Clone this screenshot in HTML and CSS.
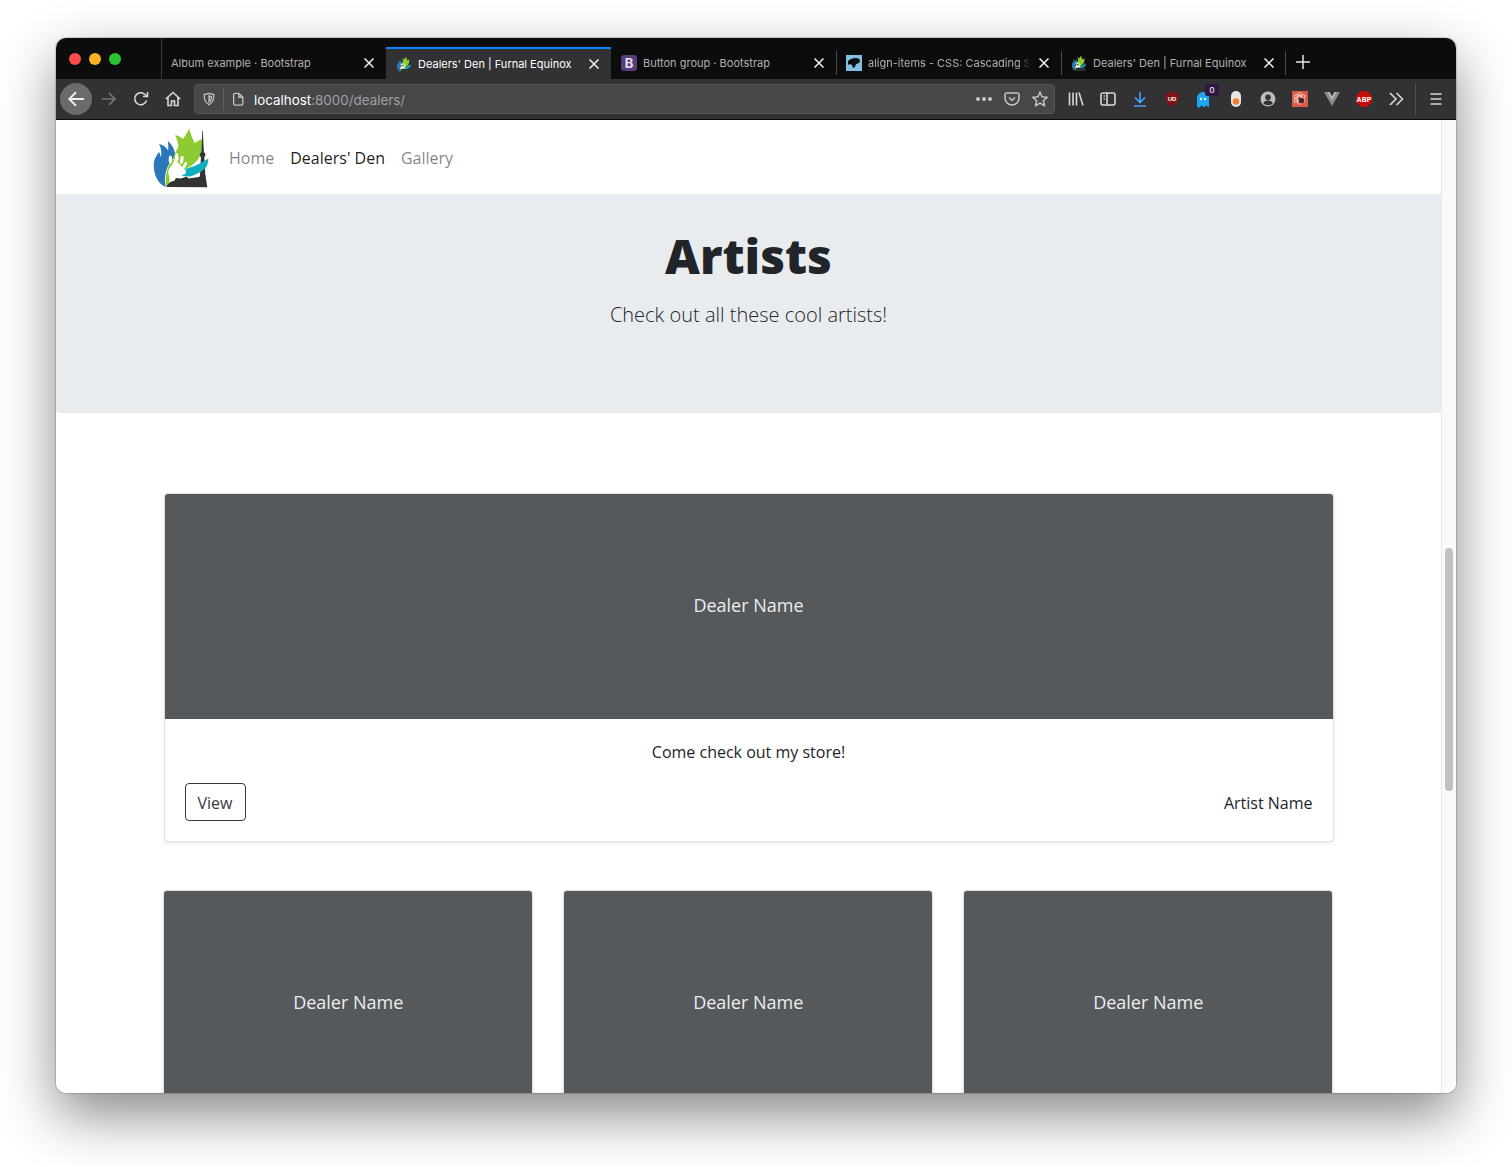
FILE: index.html
```html
<!DOCTYPE html>
<html lang="en">
<head>
    <meta charset="UTF-8">
    <title>Dealers' Den | Furnal Equinox</title>
    <link rel="stylesheet" href="styles.css">
</head>
<body>
    <svg class="defs" width="0" height="0">
        <symbol id="logo" viewBox="40 15 170 185">
            <path fill="#2a78b8" d="M78 197C58 190 42 165 42 130c0-15 8-25 16-38l6 16c2-16 0-28-6-40 12 4 22 10 27 20 1-8 1-16-1-28 14 12 24 30 22 48l-16 17C78 145 72 170 78 197z"/>
            <path fill="#8ccb32" d="M148 22c4 18 10 30 16 44l24-14c0 23-4 48-12 60-11 16-26 24-41 33l-35-35 16-35c-2-13-6-25-10-33 10 2 18 6 24 12 6-10 14-20 18-32zM97 112c-13 23-23 53-18 83 5-5 9-10 11-17-4-23 2-43 14-60z"/>
            <path fill="#333" d="M80 197c4-12 12-17 24-19l4-8 16 2 16-6 6 6 26-4 8-2 3-58c-5-4-5-12 1-15l2-33 1-30h2l1 30 2 33c6 3 6 11 1 15l3 50 6 40z"/>
            <path fill="#10afc0" d="M205 112c0 10-1 18-7 26-12 14-32 22-46 28l-25-2 3-19c20-5 45-13 75-33z"/>
            <path fill="#fff" d="M93 136c8-8 17-8 25-3 10 6 24 12 20 23-5 8-18 3-27 5-8 2-18 7-24 1-4-9 0-19 6-26zM91 103c5 0 7 8 6 15s-4 10-8 8c-3-5-3-23 2-23zM109 96c5-1 8 8 7 16s-4 10-7 9c-4-4-5-24 0-25zM127 104c5 1 5 10 3 17s-6 9-9 7c-2-5 1-25 6-24zM140 122c3 2 1 9-2 14s-7 6-9 3c-1-6 7-19 11-17z"/>
        </symbol>
    </svg>

    <div class="window">
        <div class="tabbar">
            <div class="lights">
                <span class="light red"></span>
                <span class="light yellow"></span>
                <span class="light green"></span>
            </div>
            <div class="tab sep first-tab">
                <span class="tab-title">Album example · Bootstrap</span>
                <svg class="tab-close" viewBox="0 0 10 10"><path d="M.5.5l9 9M9.5.5l-9 9"/></svg>
            </div>
            <div class="tab active">
                <svg class="favicon"><use href="#logo"/></svg>
                <span class="tab-title">Dealers' Den | Furnal Equinox</span>
                <svg class="tab-close" viewBox="0 0 10 10"><path d="M.5.5l9 9M9.5.5l-9 9"/></svg>
            </div>
            <div class="tab">
                <span class="favicon fav-b">B</span>
                <span class="tab-title">Button group · Bootstrap</span>
                <svg class="tab-close" viewBox="0 0 10 10"><path d="M.5.5l9 9M9.5.5l-9 9"/></svg>
            </div>
            <div class="tab sep">
                <svg class="favicon" viewBox="0 0 16 16"><rect width="16" height="16" fill="#83bfe0"/><path fill="#0c0c0d" d="M2 6c2-2 5-3 8-3 2 0 4 1 4 3l-1 2-3 1-1 3-2 1-1-3-2-1-2 1z"/></svg>
                <span class="tab-title fade">align-items - CSS: Cascading S</span>
                <svg class="tab-close" viewBox="0 0 10 10"><path d="M.5.5l9 9M9.5.5l-9 9"/></svg>
            </div>
            <div class="tab sep sep-end">
                <svg class="favicon"><use href="#logo"/></svg>
                <span class="tab-title">Dealers' Den | Furnal Equinox</span>
                <svg class="tab-close" viewBox="0 0 10 10"><path d="M.5.5l9 9M9.5.5l-9 9"/></svg>
            </div>
            <svg class="new-tab" viewBox="0 0 14 14"><path d="M7 0v14M0 7h14"/></svg>
        </div>

        <div class="toolbar">
            <button class="tool back"><svg viewBox="0 0 16 16"><path d="M15 8H2M8 2L2 8l6 6"/></svg></button>
            <button class="tool dim"><svg viewBox="0 0 16 16"><path d="M1 8h13M8 2l6 6-6 6"/></svg></button>
            <button class="tool"><svg viewBox="0 0 16 16"><path d="M13.500 9.500A6 6 0 1 1 12 3.500l2 2M14.500 1v4.500h-4.500"/></svg></button>
            <button class="tool"><svg viewBox="0 0 16 16"><path d="M.8 8L8 1.500 15.200 8M3 6.500V14.500h3.500V10h3v4.500H13V6.500"/></svg></button>

            <div class="urlbar">
                <svg class="url-icon" viewBox="0 0 16 16"><path d="M8 1.500l5.500 1.500c.2 5-1.500 9.500-5.500 11.500C4 12.500 2.300 8 2.500 3zM8 4.500l2.800.8C10.800 8 10 10 8 11.300z"/></svg>
                <span class="url-sep"></span>
                <svg class="url-icon" viewBox="0 0 16 16"><path d="M3 3a1.500 1.500 0 0 1 1.500-1.500H9L13.500 6v7.500A1.500 1.500 0 0 1 12 15H4.500A1.500 1.500 0 0 1 3 13.500zM9 1.500V6h4.500"/></svg>
                <span class="url-text">localhost<span class="url-rest">:8000/dealers/</span></span>
                <span class="url-dots"><i></i><i></i><i></i></span>
                <svg class="url-icon pocket" viewBox="0 0 16 16"><path d="M2.500 2h11A1.500 1.500 0 0 1 15 3.500V7A7 7 0 0 1 1 7V3.500A1.500 1.500 0 0 1 2.500 2zM5 6.500l3 3 3-3"/></svg>
                <svg class="url-icon star" viewBox="0 0 16 16"><path d="M8 1.200l2.100 4.500 4.900.6-3.600 3.400.9 4.900L8 12.200l-4.300 2.400.9-4.900L1 6.300l4.900-.6z"/></svg>
            </div>

            <button class="tool"><svg viewBox="0 0 16 16"><path d="M1.500 1.500v13M5 1.500v13M8.500 1.500v13M11 1.500l4 13"/></svg></button>
            <button class="tool"><svg viewBox="0 0 16 16"><rect x="1" y="2" width="14" height="12" rx="2"/><path d="M7 2v12M3.500 5H5M3.500 8H5"/></svg></button>
            <button class="tool blue"><svg viewBox="0 0 16 16"><path d="M8 1v10M3 6.500l5 5 5-5M2 15h12"/></svg></button>
            <button class="tool"><svg class="solid" viewBox="0 0 16 16"><path fill="#7f1416" d="M8 .5l7 2.200c.3 6.300-2.200 10.800-7 12.800C3.200 13.500.7 9 1 2.700z"/><text x="8" y="9.800" class="ext-text">UD</text></svg></button>
            <button class="tool has-badge">
                <svg class="solid ghost" viewBox="0 0 14 16"><path fill="#1ea5f5" d="M1 15V6a6 6 0 0 1 12 0v9.500l-2.500-2L8 15.500 6 13.500 3.500 15.500z"/><ellipse cx="5" cy="7" rx="1" ry="1.300" fill="#fff"/><ellipse cx="9" cy="7" rx="1" ry="1.300" fill="#fff"/></svg>
                <span class="badge">0</span>
            </button>
            <button class="tool"><svg class="solid" viewBox="0 0 16 16"><rect x="3" y="0" width="10" height="16" rx="5" fill="#e6e6e7"/><circle cx="8" cy="10.500" r="3.200" fill="#f27b2c"/></svg></button>
            <button class="tool"><svg class="solid" viewBox="0 0 16 16"><circle cx="8" cy="8" r="7.500" fill="#bcbcbe"/><circle cx="8" cy="6.300" r="2.800" fill="#323234"/><path fill="#323234" d="M3.300 12.200c1-2 2.700-2.700 4.700-2.700s3.700.7 4.700 2.700a6.200 6.200 0 0 1-9.400 0z"/></svg></button>
            <button class="tool"><svg class="solid" viewBox="0 0 16 16"><rect width="16" height="16" fill="#dc5a45"/><g fill="none" stroke="#f5d9d3" stroke-width=".9"><ellipse cx="7.500" cy="7.500" rx="6" ry="2.500" transform="rotate(30 7.500 7.500)"/><ellipse cx="7.500" cy="7.500" rx="6" ry="2.500" transform="rotate(-30 7.500 7.500)"/><ellipse cx="7.500" cy="7.500" rx="2.500" ry="6"/></g><circle cx="9.500" cy="9.500" r="2.800" fill="#3a2a2a"/></svg></button>
            <button class="tool"><svg class="solid" viewBox="0 0 16 16"><path fill="#8c8c8e" d="M0 1h5.500L8 5.500 10.500 1H16L8 15z"/><path fill="#b8b8ba" d="M3.500 1h2L8 5.500 10.500 1h2L8 9z"/></svg></button>
            <button class="tool"><svg class="solid" viewBox="0 0 16 16"><path fill="#c70d0c" d="M5 0h6l5 5v6l-5 5H5l-5-5V5z"/><text x="8" y="10.500" class="ext-text abp">ABP</text></svg></button>
            <button class="tool"><svg viewBox="0 0 16 16"><path d="M2 2l6 6-6 6M8.500 2l6 6-6 6"/></svg></button>
            <span class="tool-sep"></span>
            <button class="tool menu"><svg viewBox="0 0 16 16"><path d="M2.500 3h11M2.500 8h11M2.500 13h11"/></svg></button>
        </div>

        <div class="content">
            <div class="page">
                <nav class="navbar">
                    <svg class="brand"><use href="#logo"/></svg>
                    <a class="nav-link" href="#">Home</a>
                    <a class="nav-link current" href="#">Dealers' Den</a>
                    <a class="nav-link" href="#">Gallery</a>
                </nav>

                <section class="jumbotron">
                    <h1>Artists</h1>
                    <p class="lead">Check out all these cool artists!</p>
                </section>

                <main class="album">
                    <div class="card">
                        <div class="thumb">Dealer Name</div>
                        <div class="card-body">
                            <p class="card-text">Come check out my store!</p>
                            <div class="card-foot">
                                <a class="btn" href="#">View</a>
                                <span>Artist Name</span>
                            </div>
                        </div>
                    </div>

                    <div class="row">
                        <div class="card"><div class="thumb">Dealer Name</div></div>
                        <div class="card"><div class="thumb">Dealer Name</div></div>
                        <div class="card"><div class="thumb">Dealer Name</div></div>
                    </div>
                </main>
            </div>
            <div class="scrollbar"><span class="scroll-thumb"></span></div>
        </div>
    </div>
</body>
</html>
```
FILE: styles.css
```css
* {
  box-sizing: border-box;
}

html,
body {
  height: 1167px;
  overflow: hidden;
}

body {
  margin: 0;
  padding: 38px 56px 0;
  background-color: #fff;
  font-family: "Open Sans", sans-serif;
  color: #212529;
}

.defs {
  display: block;
  height: 0;
}

.window {
  width: 1400px;
  height: 1055px;
  display: flex;
  flex-direction: column;
  overflow: hidden;
  border-radius: 10px;
  box-shadow: 0 0 0 1px rgba(0, 0, 0, 0.15), 0 22px 55px rgba(0, 0, 0, 0.47);
}

/* tab strip */
.tabbar {
  height: 41px;
  flex: none;
  display: flex;
  align-items: flex-end;
  background-color: #0c0c0d;
  font-family: Inter, "Liberation Sans", sans-serif;
  font-size: 11px;
  color: #b1b1b3;
}

.lights {
  width: 105px;
  height: 41px;
  display: flex;
  gap: 8px;
  padding: 15px 0 0 13px;
}

.light {
  width: 12px;
  height: 12px;
  border-radius: 50%;
}

.red { background-color: #fc4c4c; }
.yellow { background-color: #fdb225; }
.green { background-color: #2ac432; }

.tab {
  position: relative;
  width: 225px;
  height: 32px;
  display: flex;
  align-items: center;
  gap: 6px;
  padding: 0 12px 0 10px;
}

.tab.active {
  background-color: #323234;
  border-top: 2px solid #0a84ff;
  color: #fff;
}

.tab.sep::before,
.sep-end::after {
  content: "";
  position: absolute;
  top: 4px;
  bottom: 4px;
  left: 0;
  width: 1px;
  background-color: #4a4a4f;
}

.tab.first-tab::before {
  top: -9px;
  bottom: 0;
  background-color: #3a3a3c;
}

.sep-end::after {
  left: auto;
  right: 0;
}

.tab-title {
  flex: 1;
  white-space: nowrap;
}

.fade {
  -webkit-mask-image: linear-gradient(to right, #000 150px, transparent 163px);
  mask-image: linear-gradient(to right, #000 150px, transparent 163px);
}

.tab-close {
  width: 10px;
  height: 10px;
  flex: none;
  fill: none;
  stroke: #f2f2f2;
  stroke-width: 1.5;
}

.favicon {
  width: 16px;
  height: 16px;
  flex: none;
}

.fav-b {
  display: flex;
  align-items: center;
  justify-content: center;
  border-radius: 3px;
  background-color: #563d7c;
  color: #e4e0ea;
  font-size: 13px;
  font-weight: bold;
}

.new-tab {
  width: 14px;
  height: 14px;
  margin: 0 0 10px 10px;
  fill: none;
  stroke: #e6e6e6;
  stroke-width: 1.5;
}

/* toolbar */
.toolbar {
  height: 41px;
  flex: none;
  display: flex;
  align-items: center;
  padding: 0 0 1px 4px;
  background-color: #323234;
  border-bottom: 1px solid #0c0c0d;
}

.tool {
  position: relative;
  width: 32px;
  height: 32px;
  flex: none;
  display: flex;
  align-items: center;
  justify-content: center;
  padding: 0;
  border: none;
  border-radius: 50%;
  background: none;
}

.tool svg {
  width: 16px;
  height: 16px;
  fill: none;
  stroke: #d7d7db;
  stroke-width: 1.600;
}

.tool svg.solid {
  stroke: none;
}

.tool svg.ghost {
  width: 14px;
  height: 16px;
  margin: 2px 2px 0 0;
}

.tool.back {
  background-color: #6b6b6d;
}

.tool.back svg {
  width: 18px;
  height: 18px;
  stroke: #f0f0f2;
}

.tool.dim {
  margin-left: 1px;
}

.tool.dim svg {
  stroke: #77777a;
}

.tool.blue svg {
  stroke: #45a1ff;
}

.ext-text {
  font-family: "Liberation Sans", Arial, sans-serif;
  font-size: 6px;
  font-weight: bold;
  text-anchor: middle;
  fill: #fff;
}

.abp {
  font-size: 7px;
}

.badge {
  position: absolute;
  top: 1px;
  right: 1px;
  width: 14px;
  border-radius: 2px;
  background-color: #32163f;
  color: #fff;
  font-family: "Liberation Sans", Arial, sans-serif;
  font-size: 9px;
  line-height: 12px;
  text-align: center;
}

.tool-sep {
  width: 1px;
  height: 32px;
  margin-left: 3px;
  background-color: #4f4f52;
}

.tool.menu {
  margin-left: 4px;
}

.urlbar {
  width: 861px;
  height: 30px;
  flex: none;
  display: flex;
  align-items: center;
  margin: 0 5px;
  padding: 0 6px 0 7px;
  border: 1px solid #555558;
  border-radius: 4px;
  background-color: #474749;
  font-family: Inter, "Liberation Sans", sans-serif;
  font-size: 13.4px;
  color: #fff;
}

.url-icon {
  width: 14px;
  height: 14px;
  flex: none;
  fill: none;
  stroke: #c4c4c7;
  stroke-width: 1.500;
}

.url-sep {
  width: 1px;
  height: 22px;
  margin: 0 7px;
  background-color: #5f5f62;
}

.url-text {
  flex: 1;
  margin-left: 9px;
  padding-top: 2px;
}

.url-rest {
  color: #a0a0a3;
}

.url-dots {
  display: flex;
  gap: 2px;
  margin-right: 12px;
}

.url-dots i {
  width: 4px;
  height: 4px;
  border-radius: 50%;
  background-color: #c4c4c7;
}

.pocket {
  width: 16px;
  height: 16px;
  margin-right: 12px;
}

.star {
  width: 16px;
  height: 16px;
}

/* page */
.content {
  flex: 1;
  display: flex;
  min-height: 0;
  background-color: #fff;
}

.page {
  flex: 1;
  min-width: 0;
  overflow: hidden;
}

.scrollbar {
  width: 15px;
  flex: none;
  padding: 428px 3px 0 3px;
  background-color: #fafafa;
  border-left: 1px solid #e8e8e8;
}

.scroll-thumb {
  display: block;
  height: 243px;
  border-radius: 4px;
  background-color: #c1c1c1;
}

.navbar {
  height: 74px;
  display: flex;
  align-items: center;
  padding-left: 97px;
}

.brand {
  width: 57px;
  height: 62px;
  margin-right: 11px;
}

.nav-link {
  padding: 10px 8px 8px;
  color: rgba(0, 0, 0, 0.5);
  font-size: 16px;
  text-decoration: none;
}

.nav-link.current {
  color: rgba(0, 0, 0, 0.9);
}

.jumbotron {
  height: 219px;
  padding-top: 30px;
  border-radius: 0 0 4px 4px;
  background-color: #e9ecef;
  text-align: center;
}

h1 {
  margin: 0 0 13px;
  font-size: 48px;
  font-weight: 800;
  line-height: 63px;
}

.lead {
  margin: 0;
  font-size: 20px;
  font-weight: 300;
  line-height: 30px;
}

.album {
  width: 1170px;
  margin: 80px auto 0;
}

.card {
  border: 1px solid rgba(0, 0, 0, 0.125);
  border-radius: 4px;
  background-color: #fff;
  box-shadow: 0 2px 4px rgba(0, 0, 0, 0.075);
  overflow: hidden;
}

.thumb {
  height: 225px;
  display: flex;
  align-items: center;
  justify-content: center;
  padding-bottom: 4px;
  background-color: #55595c;
  color: #eceeef;
  font-size: 18px;
}

.card-body {
  padding: 21px 20px 20px;
}

.card-text {
  margin: 0 0 19px;
  line-height: 24px;
  font-size: 16px;
  text-align: center;
}

.card-foot {
  display: flex;
  align-items: center;
  justify-content: space-between;
  font-size: 16px;
}

.card-foot span {
  padding-top: 2px;
}

.btn {
  width: 61px;
  height: 38px;
  padding: 7px 0 5px;
  border: 1px solid #343a40;
  border-radius: 4px;
  color: #343a40;
  line-height: 24px;
  text-align: center;
  text-decoration: none;
}

.row {
  display: grid;
  grid-template-columns: repeat(3, 370px);
  gap: 30px;
  margin: 48px 0 0 -0.25px;
}

.row .card {
  height: 400px;
}
```
